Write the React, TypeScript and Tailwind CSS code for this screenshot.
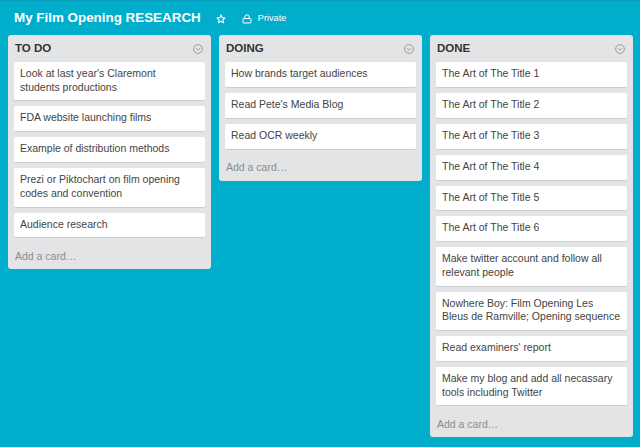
const lists = [
  {
    title: 'TO DO',
    cards: [
      "Look at last year's Claremont\nstudents productions",
      'FDA website launching films',
      'Example of distribution methods',
      'Prezi or Piktochart on film opening codes and convention',
      'Audience research',
    ],
  },
  {
    title: 'DOING',
    cards: ['How brands target audiences', "Read Pete's Media Blog", 'Read OCR weekly'],
  },
  {
    title: 'DONE',
    cards: [
      'The Art of The Title 1',
      'The Art of The Title 2',
      'The Art of The Title 3',
      'The Art of The Title 4',
      'The Art of The Title 5',
      'The Art of The Title 6',
      'Make twitter account and follow all relevant people',
      'Nowhere Boy: Film Opening Les Bleus de Ramville; Opening sequence',
      "Read examiners' report",
      'Make my blog and add all necassary tools including Twitter',
    ],
  },
];

function ChevronCircle() {
  return (
    <svg width="10" height="10" viewBox="0 0 10 10" fill="none" stroke="#8a8d90" strokeWidth="0.8">
      <circle cx="5" cy="5" r="4.4" />
      <path d="M3 4.2 L5 6.2 L7 4.2" />
    </svg>
  );
}

function Star() {
  return (
    <svg width="10" height="10" viewBox="0 0 24 24" fill="none" stroke="white" strokeWidth="2.6" strokeLinejoin="round">
      <path d="M12 2.5l2.9 6.2 6.8.8-5 4.7 1.3 6.7-6-3.3-6 3.3 1.3-6.7-5-4.7 6.8-.8z" />
    </svg>
  );
}

function Lock() {
  return (
    <svg width="10" height="10" viewBox="0 0 10 10" fill="none" stroke="white" strokeWidth="1">
      <rect x="1" y="4.5" width="8" height="4.5" rx="0.6" />
      <path d="M2.8 4.5V3a2.2 2.2 0 0 1 4.4 0v1.5" />
    </svg>
  );
}

export default function App() {
  return (
    <div className="h-[447px] w-[640px] overflow-hidden border-t border-[#0a9dba] bg-[#00aecc] font-['Liberation_Sans',sans-serif]">
      <header className="flex h-[34px] items-center pl-[14px] pt-[1px]">
        <h1 className="text-[13.4px] font-bold text-white">My Film Opening RESEARCH</h1>
        <span className="ml-[15px] flex"><Star /></span>
        <span className="ml-[16px] flex"><Lock /></span>
        <span className="ml-[6px] text-[9.2px] text-white">Private</span>
      </header>
      <div className="flex items-start gap-[8px] pl-[8px]">
        {lists.map(list => (
          <section key={list.title} className="w-[203px] rounded-[3px] bg-[#e2e4e6] px-[6px]">
            <div className="flex h-[27px] items-center justify-between pl-[1px] pr-[2px]">
              <h2 className="text-[11.5px] font-bold text-[#333]">{list.title}</h2>
              <ChevronCircle />
            </div>
            <div className="flex flex-col gap-[5px]">
              {list.cards.map(card => (
                <div
                  key={card}
                  className="whitespace-pre-line rounded-[2px] border-b border-[#ccc] bg-white pb-[6.4px] pl-[6px] pr-[5px] pt-[5px] text-[10.5px] leading-[13.5px] text-[#444]"
                >
                  {card}
                </div>
              ))}
            </div>
            <div className="flex h-[31px] items-center pl-[1px] pt-[5px] text-[10.5px] text-[#8c8c8c]">Add a card…</div>
          </section>
        ))}
      </div>
    </div>
  );
}
